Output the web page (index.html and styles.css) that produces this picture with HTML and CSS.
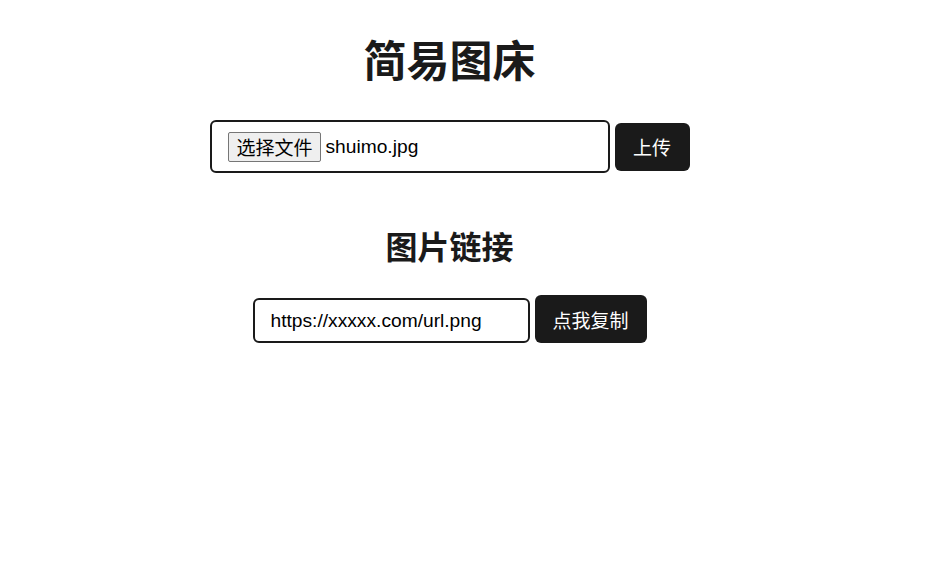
FILE: index.html
```html
<!DOCTYPE html>
<html lang="zh-CN">
<head>
<meta charset="utf-8">
<title>简易图床</title>
<link rel="stylesheet" href="styles.css">
</head>
<body>
<main class="page">
  <h1 class="title">简易图床</h1>
  <div class="upload-row">
    <label class="file-box">
      <span class="file-btn">选择文件</span>
      <span class="file-name">shuimo.jpg</span>
    </label>
    <button class="btn btn-upload" type="button">上传</button>
  </div>
  <h2 class="subtitle">图片链接</h2>
  <div class="link-row">
    <input class="link-input" type="text" value="https://xxxxx.com/url.png" readonly>
    <button class="btn btn-copy" type="button">点我复制</button>
  </div>
</main>
</body>
</html>
```
FILE: styles.css
```css
* { box-sizing: border-box; }
html, body {
  margin: 0;
  padding: 0;
  background: #ffffff;
}
body {
  font-family: "Liberation Sans", Arial, "Noto Sans CJK SC", sans-serif;
  color: #1a1a1a;
}
.page {
  width: 899px;
  padding-top: 28px;
  display: flex;
  flex-direction: column;
  align-items: center;
}
.title {
  margin: 0;
  font-size: 43px;
  font-weight: 700;
  line-height: 60px;
  font-family: "Noto Sans CJK SC", sans-serif;
}
.upload-row {
  margin-top: 32px;
  display: flex;
  align-items: center;
  gap: 5px;
}
.file-box {
  width: 400px;
  height: 53px;
  border: 2px solid #1a1a1a;
  border-radius: 6px;
  display: flex;
  align-items: center;
  padding-left: 16px;
  font-size: 19.2px;
}
.file-btn {
  font-family: "Noto Sans CJK SC", sans-serif;
  font-size: 19px;
  line-height: 28px;
  height: 30px;
  padding: 0 7px 0 8px;
  background: #efefef;
  border: 1px solid #767676;
  border-radius: 2px;
  color: #000;
  display: flex;
  align-items: center;
}
.file-name {
  margin-left: 5px;
  color: #000;
}
.btn {
  border: 0;
  background: #1a1a1a;
  color: #fff;
  border-radius: 6px;
  font-family: "Noto Sans CJK SC", sans-serif;
  font-size: 19px;
  padding: 0;
}
.btn-upload {
  width: 75px;
  height: 48px;
}
.subtitle {
  margin: 50px 0 0;
  font-size: 32px;
  font-weight: 700;
  line-height: 44px;
  font-family: "Noto Sans CJK SC", sans-serif;
}
.link-row {
  margin-top: 28px;
  display: flex;
  align-items: flex-end;
  gap: 5px;
}
.link-input {
  width: 277px;
  height: 45px;
  border: 2px solid #1a1a1a;
  border-radius: 6px;
  padding: 0 16px;
  font-family: "Liberation Sans", Arial, sans-serif;
  font-size: 19.2px;
  color: #000;
  outline: none;
}
.btn-copy {
  width: 112px;
  height: 48px;
}
```
